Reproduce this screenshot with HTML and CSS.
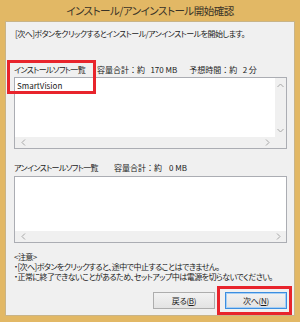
FILE: index.html
```html
<!DOCTYPE html>
<html>
  <head>
    <meta charset="UTF-8" />
    <title>インストール/アンインストール開始確認</title>
    <link rel="stylesheet" href="styles.css">
  </head>
  <body>
    <div class="window">
      <div class="titlebar">インストール/アンインストール開始確認</div>
      <div class="client">
        <p class="intro">[次へ]ボタンをクリックするとインストール/アンインストールを開始します。</p>

        <div class="label-row">
          <span class="label-name">インストールソフト一覧</span>
          <span class="label-size">容量合計：約&nbsp;&nbsp;&nbsp;170 MB</span>
          <span class="label-time">予想時間：約&nbsp;&nbsp;&nbsp;2 分</span>
        </div>
        <div class="listbox listbox-install">
          <div class="list-items">
            <div class="list-item">SmartVision</div>
          </div>
          <div class="vscroll">
            <svg width="7" height="5" viewBox="0 0 7 5"><path d="M0.5 4 L3.5 1 L6.5 4" fill="none" stroke="#a6a6a6" stroke-width="1"/></svg>
            <svg width="7" height="5" viewBox="0 0 7 5"><path d="M0.5 1 L3.5 4 L6.5 1" fill="none" stroke="#a6a6a6" stroke-width="1"/></svg>
          </div>
          <div class="hscroll">
            <svg width="5" height="7" viewBox="0 0 5 7"><path d="M4 0.5 L1 3.5 L4 6.5" fill="none" stroke="#a6a6a6" stroke-width="1"/></svg>
            <svg width="5" height="7" viewBox="0 0 5 7"><path d="M1 0.5 L4 3.5 L1 6.5" fill="none" stroke="#a6a6a6" stroke-width="1"/></svg>
          </div>
          <div class="corner"></div>
        </div>

        <div class="label-row label-row-un">
          <span class="label-name">アンインストールソフト一覧</span>
          <span class="label-size">容量合計：約&nbsp;&nbsp;&nbsp;&nbsp;0 MB</span>
        </div>
        <div class="listbox listbox-uninstall">
          <div class="list-items"></div>
          <div class="hscroll">
            <svg width="5" height="7" viewBox="0 0 5 7"><path d="M4 0.5 L1 3.5 L4 6.5" fill="none" stroke="#a6a6a6" stroke-width="1"/></svg>
            <svg width="5" height="7" viewBox="0 0 5 7"><path d="M1 0.5 L4 3.5 L1 6.5" fill="none" stroke="#a6a6a6" stroke-width="1"/></svg>
          </div>
        </div>

        <div class="notes">
          <div>&lt;注意&gt;</div>
          <div>・[次へ]ボタンをクリックすると、途中で中止することはできません。</div>
          <div>・正常に終了できないことがあるため、セットアップ中は電源を切らないでください。</div>
        </div>

        <div class="buttons">
          <button class="btn">戻る(<u>B</u>)</button>
          <button class="btn btn-default">次へ(<u>N</u>)</button>
        </div>
      </div>

      <!-- red annotation frames -->
      <div class="mark mark-label"></div>
      <div class="mark mark-next"></div>
    </div>
  </body>
</html>
```

FILE: styles.css
```css
html, body { margin: 0; padding: 0; }
body {
    width: 300px;
    height: 322px;
    overflow: hidden;
    font-family: "Noto Sans CJK JP", "Noto Sans", sans-serif;
    font-feature-settings: "palt";
    color: #1b1b1b;
}
.window {
    position: relative; /* for annotation frames */
    width: 300px;
    height: 322px;
    background-color: #e2b865;
    display: flex;
    flex-direction: column;
}
.titlebar {
    height: 21px;
    line-height: 22px;
    text-align: center;
    font-size: 10.5px;
    letter-spacing: -0.5px;
    color: #3a3327;
}
.client {
    margin: 0 5px 6px 5px;
    flex: 1;
    border: 1px solid #c9b487;
    background-color: #f0f0f0;
    padding: 0 7px 0 8px;
    display: flex;
    flex-direction: column;
    font-size: 8px;
    letter-spacing: -0.55px;
    white-space: nowrap;
}
.intro {
    margin: 6px 0 0 1px;
    line-height: 12px;
    height: 12px;
}
.label-row {
    margin-top: 24px;
    height: 12px;
    line-height: 12px;
    display: flex;
}
.label-row .label-name { letter-spacing: -0.65px; }
.label-row .label-size,
.label-row .label-time {
    font-feature-settings: normal;
    letter-spacing: 0;
}
.label-row .label-size { margin-left: 12px; }
.label-row .label-time { margin-left: 12px; }
.label-row-un { margin-top: 13px; }
.label-row-un .label-size { margin-left: 16px; }

.listbox {
    margin-top: 1px;
    border: 1px solid #abadb3;
    background-color: #fff;
    display: grid;
    box-sizing: border-box;
}
.listbox-install {
    height: 72px;
    grid-template-columns: 1fr 11px;
    grid-template-rows: 1fr 11px;
}
.listbox-uninstall {
    margin-top: 2px;
    height: 67px;
    grid-template-columns: 1fr;
    grid-template-rows: 1fr 11px;
}
.list-items { padding: 2px 2px; }
.list-item { line-height: 11px; letter-spacing: 0; }
.vscroll {
    background-color: #f0f0f0;
    display: flex;
    flex-direction: column;
    justify-content: space-between;
    align-items: center;
    padding: 5px 0 4px;
}
.vscroll svg, .hscroll svg { display: block; }
.hscroll {
    background-color: #f0f0f0;
    display: flex;
    justify-content: space-between;
    align-items: center;
    padding: 0 5px 0 6px;
}
.corner { background-color: #f0f0f0; }

.notes {
    margin-top: 9px;
    line-height: 10px;
    height: 30px;
}
.buttons {
    margin-top: 10px;
    display: flex;
    justify-content: flex-end;
    gap: 10px;
}
.btn {
    width: 62px;
    height: 17px;
    padding: 0;
    font-family: inherit;
    font-feature-settings: "palt";
    font-size: 8px;
    letter-spacing: -0.3px;
    color: #1b1b1b;
    border: 1px solid #adadad;
    background: linear-gradient(#f2f2f2, #e3e3e3);
}
.btn-default {
    border-color: #3c8ee0;
    box-shadow: inset 0 0 0 1px #a6cff5;
}

/* red annotation frames */
.mark {
    position: absolute;
    border: 3px solid #e8242c;
    box-sizing: border-box;
}
.mark-label { left: 7px; top: 60px; width: 89px; height: 34px; }
.mark-next { left: 217px; top: 286px; width: 75px; height: 29px; }
```
